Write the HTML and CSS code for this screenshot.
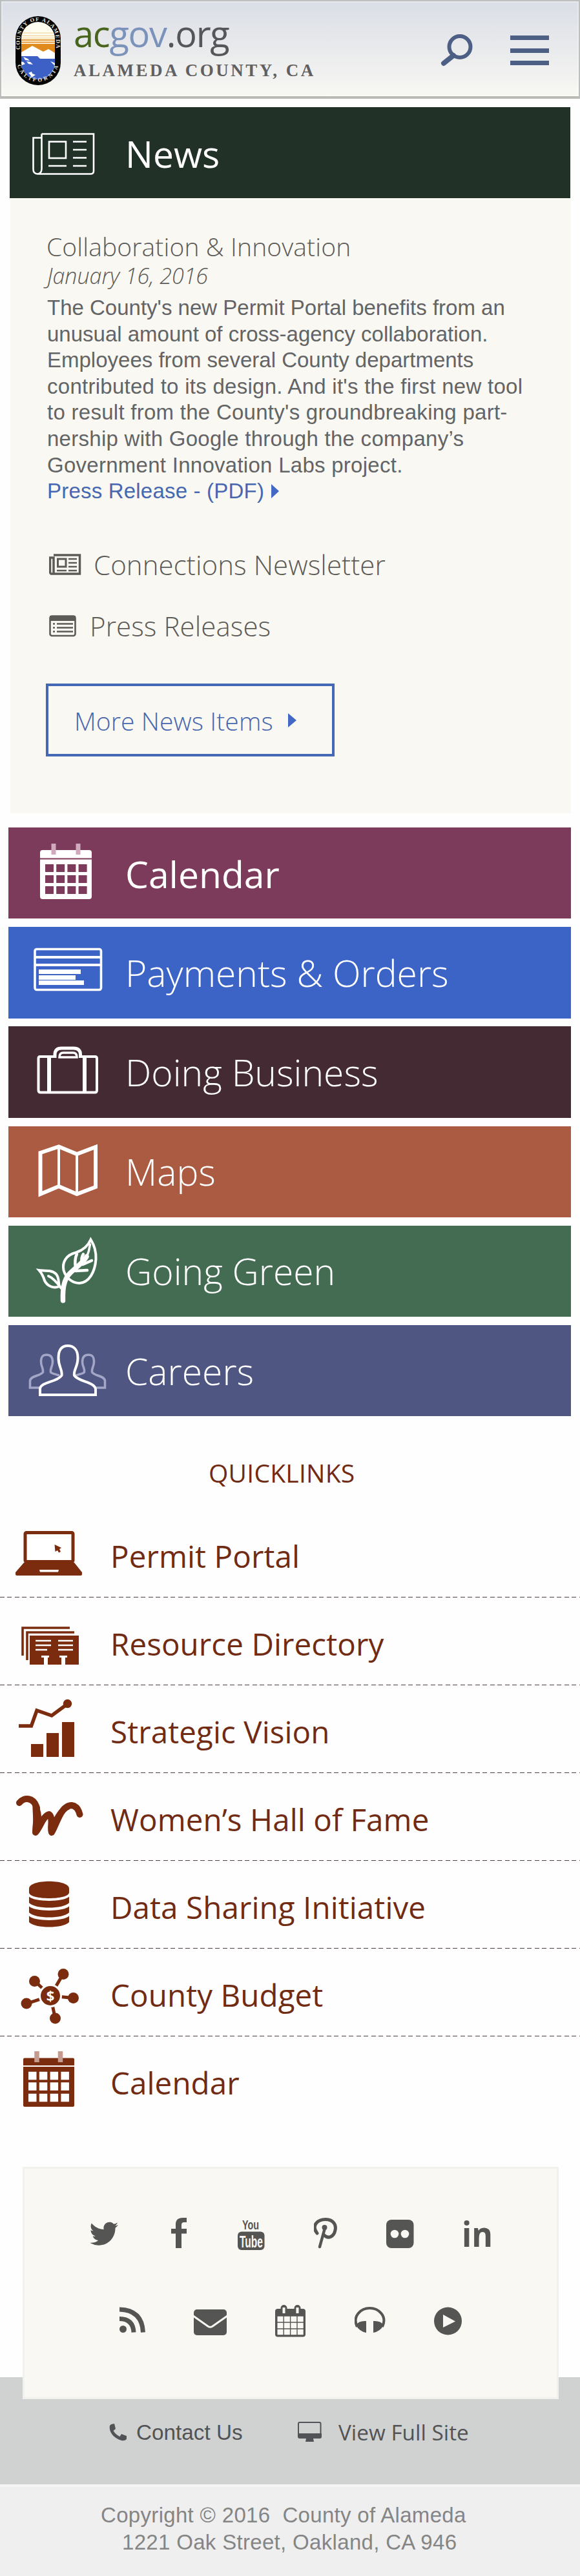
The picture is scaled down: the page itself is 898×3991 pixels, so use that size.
FILE: index.html
```html
<!DOCTYPE html>
<html lang="en">
<head>
<meta charset="utf-8">
<title>acgov.org - Alameda County, CA</title>
<link rel="stylesheet" href="styles.css">
</head>
<body>
<header class="site-header">
  <svg class="seal" viewBox="24 25 70 107" width="70" height="107">
    <defs>
      <clipPath id="sealClip"><rect x="33" y="34" width="52" height="89" rx="26"/></clipPath>
      <path id="sealTop" d="M31.500 77V60A27.500 27.500 0 0 1 86.500 60V79"/>
      <path id="sealBottom" d="M27 101A32.500 32.500 0 0 0 91 98V92"/>
    </defs>
    <rect x="24" y="25" width="70" height="107" rx="35" fill="#050505"/>
    <g clip-path="url(#sealClip)">
      <rect x="33" y="34" width="52" height="90" fill="#fffdf0"/>
      <path d="M33 51H85M33 55.500H85M33 59H85" stroke="#f3c98a" stroke-width="1.200"/>
      <path d="M33 62H85M33 65.500H85" stroke="#e59a3a" stroke-width="2"/>
      <rect x="33" y="68" width="52" height="20" fill="#e08a1c"/>
      <path d="M33 81L50 71L67 80L75 76L85 82V92H33Z" fill="#fff"/>
      <path d="M33 87H58L62 91H85V124H33Z" fill="#3c60c6"/>
      <path d="M36 88L43 91L46 94L39 93ZM41 95L47 96L51 100L44 99ZM30 95L36 96L39 99L34 101ZM78 95L86 98L85 102ZM44 113L49 111L50 114L55 116L49 120L47 116Z" fill="#fff"/>
    </g>
    <text class="seal-text"><textPath href="#sealTop" textLength="118">COUNTY OF ALAMEDA</textPath></text>
    <text class="seal-text"><textPath href="#sealBottom" textLength="86">CALIFORNIA</textPath></text>
  </svg>
  <div class="brand">
    <div class="brand-name"><span class="brand-ac">ac</span><span class="brand-gov">gov</span>.org</div>
    <div class="brand-sub">ALAMEDA COUNTY, CA</div>
  </div>
  <svg class="icon-search" viewBox="682 50 52 54" width="52" height="54">
    <path d="M702 86L687 98" stroke="#4d5f85" stroke-width="8" stroke-linecap="round"/>
    <circle cx="712" cy="72.500" r="16.500" fill="none" stroke="#4d5f85" stroke-width="6"/>
  </svg>
  <div class="hamburger"><i></i><i></i><i></i></div>
</header>

<section class="news-head">
  <svg viewBox="15 166 184 141" width="184" height="141" fill="none" stroke="#fff" stroke-width="2.600">
    <path d="M64.500 207.500H145V265Q145 269.500 140 269.500H58Q51.500 269 51.500 262V213.500H64.500M64.500 207.500V262Q64 269 58 269.500"/>
    <rect x="76" y="219.500" width="26" height="25.500"/>
    <path d="M113 219.500H134M113 232H134M113 244.500H134M113 257H134M75 257H103"/>
  </svg>
  <h2 class="bar-title regular">News</h2>
</section>
<section class="panel">
  <h3 class="story-title">Collaboration &amp; Innovation</h3>
  <p class="story-date">January 16, 2016</p>
  <p class="story">The County's new Permit Portal benefits from an<br>unusual amount of cross-agency collaboration.<br>Employees from several County departments<br><span class="loose">contributed to its design. And it's the first new tool<br>to result from the County's groundbreaking part-<br>nership with Google through the company’s<br>Government Innovation Labs project.</span><br><a class="pdf">Press Release - (PDF)<svg viewBox="0 0 12 22" width="12" height="22"><path d="M0 0L12 11L0 22Z" fill="#4369c4"/></svg></a></p>
  <div class="feed">
    <svg viewBox="76 858 50 34" width="50" height="34" fill="none" stroke="#5c5b57">
      <path d="M83 860H123.500V889H79Q77.500 888 77.500 886V864H83V888" stroke-width="3.500"/>
      <rect x="89.500" y="866" width="12.500" height="12" stroke-width="3"/>
      <path d="M106 866H119M106 872H119M106 878H119M106 884H119M88 884H103" stroke-width="2.600"/>
    </svg>
    <span>Connections Newsletter</span>
  </div>
  <div class="feed feed-press">
    <svg viewBox="76 953 42 34" width="42" height="34">
      <rect x="77.500" y="954.500" width="39" height="30.500" rx="3" fill="none" stroke="#5c5b57" stroke-width="2.600"/>
      <path d="M77 954H117V962H77Z" fill="#5c5b57"/>
      <path d="M82 966.500H85M88 966.500H113M82 972.500H85M88 972.500H113M82 978.500H85M88 978.500H113" stroke="#5c5b57" stroke-width="2.600"/>
    </svg>
    <span>Press Releases</span>
  </div>
  <a class="more"><span>More News Items</span><svg viewBox="0 0 13 22" width="13" height="22"><path d="M0 0L13 11L0 22Z" fill="#4369c4"/></svg></a>
</section>

<nav class="menu">
  <a class="bar plum">
    <svg viewBox="13 1282 186 141" width="186" height="141">
      <rect x="62" y="1317" width="80" height="76" rx="4" fill="#fff"/>
      <path d="M62 1330.500H142" stroke="#7d3b5c" stroke-width="2"/>
      <path d="M83 1307V1324M121 1307V1324" stroke="#d0a9bd" stroke-width="7"/>
      <path d="M70 1345H135M70 1362H135M70 1379H135" stroke="#7d3b5c" stroke-width="12" stroke-dasharray="13 4.200"/>
    </svg>
    <h2 class="bar-title regular">Calendar</h2>
  </a>
  <a class="bar blue">
    <svg viewBox="13 1437 186 141" width="186" height="141">
      <rect x="54" y="1471.500" width="102.500" height="63" rx="3" fill="none" stroke="#fff" stroke-width="3.600"/>
      <path d="M54 1484H156M54 1496H156" stroke="#fff" stroke-width="4"/>
      <path d="M60 1503H125V1510H60ZM60 1512H117V1519H60ZM60 1520H130V1527H60Z" fill="#fff"/>
    </svg>
    <h2 class="bar-title">Payments &amp; Orders</h2>
  </a>
  <a class="bar maroon">
    <svg viewBox="13 1591 186 141" width="186" height="141" fill="none" stroke="#fff">
      <path d="M84 1637H62Q59.500 1637 59.500 1640V1689Q59.500 1692.500 63 1692.500H147Q150 1692.500 150 1689V1640Q150 1637 147 1637H126" stroke-width="4"/>
      <path d="M76 1637V1692M131 1637V1692" stroke-width="6"/>
      <path d="M85 1639V1634Q85 1624 95 1624H114Q124.500 1624 124.500 1634V1639" stroke-width="5"/>
      <path d="M92 1638Q92 1631 98 1631H113Q119 1631 119 1638Z" stroke-width="3.500"/>
    </svg>
    <h2 class="bar-title">Doing Business</h2>
  </a>
  <a class="bar rust">
    <svg viewBox="13 1745 186 141" width="186" height="141" fill="none" stroke="#fff">
      <path d="M62.500 1786L91 1776.500L119 1788L148 1777V1839L119 1850L91 1838L62.500 1850Z" stroke-width="6"/>
      <path d="M91 1778V1838M119 1788V1849" stroke-width="4"/>
    </svg>
    <h2 class="bar-title">Maps</h2>
  </a>
  <a class="bar green">
    <svg viewBox="13 1898 186 141" width="186" height="141" fill="none" stroke="#fff" stroke-linecap="round">
      <path d="M140.500 1919.500C136 1930 128 1936 118 1939.500C102 1943 96 1955 98.500 1967C102 1979 112 1987 123 1987C138 1986 147 1970 148.500 1950C149 1938 146 1928 140.500 1919.500Z" stroke-width="4"/>
      <path d="M97.500 2014C97 1998 98 1982 108 1972C118 1962 128 1956 134 1946" stroke-width="7.500"/>
      <path d="M134 1947Q138 1938 139.500 1927" stroke-width="3.500"/>
      <path d="M117 1964Q115 1950 119 1942M127 1956Q125 1948 129 1942M117 1968L135 1967M128 1958L142 1952" stroke-width="4.500"/>
      <path d="M60.500 1967C68 1968 80 1966 87 1973C92 1979 90 1986 92 1992C82 1996 73 1991 69 1983C67 1976 64 1971 60.500 1967Z" stroke-width="4"/>
      <path d="M75 1976Q83 1979 95 1995" stroke-width="4"/>
    </svg>
    <h2 class="bar-title">Going Green</h2>
  </a>
  <a class="bar indigo">
    <svg viewBox="13 2053 186 141" width="186" height="141" fill="none" stroke="#fff">
      <g stroke="#a3a6c6" stroke-width="3.600">
        <path id="peerShape" d="M61 2150H46.500V2139C48 2131 62 2132 66.500 2126C67.500 2119 63.500 2118 63.500 2110C63.500 2102 66 2099 72 2099C79 2099 81.500 2103 81.500 2110C81.500 2118 77 2120 78.500 2126C80 2128 86 2129 92 2131"/>
        <use href="#peerShape" transform="translate(209 0) scale(-1 1)"/>
      </g>
      <path d="M62 2161V2151C64 2141 89 2141 95.500 2131C97 2122 90.500 2118 90.500 2104C90.500 2091 96 2085 105 2085C114 2085 120.500 2091 120.500 2104C120.500 2118 113.500 2122 115 2131C122 2141 146 2141 148 2152V2161Z" stroke-width="4" fill="#4e5681"/>
    </svg>
    <h2 class="bar-title">Careers</h2>
  </a>
</nav>

<section class="quick">
  <h4 class="quick-title">QUICKLINKS</h4>
  <a class="quick-row">
    <svg viewBox="0 2339 171 134" width="171" height="134">
      <path d="M24 2436L37 2421H115L127 2436V2439Q127 2441 125 2441H26Q24 2441 24 2439Z" fill="#7b2c0e"/>
      <rect x="39" y="2374.500" width="74" height="45" rx="2" fill="#fff" stroke="#7b2c0e" stroke-width="5"/>
      <path d="M61 2432H91L90 2435.500H62Z" fill="#fff"/>
      <path d="M84.500 2393L95 2398L92 2400L94 2404L91 2405.500L89 2402L85.500 2404Z" fill="#7b2c0e"/>
    </svg>
    <span>Permit Portal</span>
  </a>
  <a class="quick-row">
    <svg viewBox="0 2475 171 134" width="171" height="134">
      <path d="M35 2565V2522H108M42 2572V2529H115" fill="none" stroke="#7b2c0e" stroke-width="3.600"/>
      <rect x="46" y="2534" width="76" height="45" fill="#7b2c0e"/>
      <path d="M55 2542H79M55 2549H79M55 2556H73M90 2542H113M90 2549H113M90 2556H113" stroke="#fff" stroke-width="2.600"/>
      <path d="M64 2565H76V2568H74V2579H68V2568H64ZM92 2565H104V2568H101V2579H95V2568H92Z" fill="#fff"/>
    </svg>
    <span>Resource Directory</span>
  </a>
  <a class="quick-row">
    <svg viewBox="0 2611 171 134" width="171" height="134">
      <path d="M29 2674H48.500L57 2650L80 2658L103 2641" fill="none" stroke="#7b2c0e" stroke-width="5.500"/>
      <circle cx="104.500" cy="2639.500" r="6.700" fill="#7b2c0e"/>
      <path d="M48 2702H67V2722H48ZM72 2685H91V2722H72ZM96 2668H115V2722H96Z" fill="#7b2c0e"/>
    </svg>
    <span>Strategic Vision</span>
  </a>
  <a class="quick-row">
    <svg viewBox="0 2747 171 134" width="171" height="134">
      <path d="M30 2793C37 2784 52 2784 57 2801C58 2814 55 2828 55 2839C63 2830 66 2814 76 2811C83 2816 77 2832 80 2839C88 2826 94 2797 111 2797C119 2798 122 2805 123.500 2811" fill="none" stroke="#7b2c0e" stroke-width="10" stroke-linecap="round" stroke-linejoin="round"/>
      <path d="M50 2790Q63 2796 64 2814L60 2836L52 2836Z" fill="#7b2c0e"/>
      <path d="M86 2812Q96 2795 110 2796L108 2803Q96 2808 84 2836L76 2830Z" fill="#7b2c0e"/>
    </svg>
    <span>Women’s Hall of Fame</span>
  </a>
  <a class="quick-row">
    <svg viewBox="0 2883 171 134" width="171" height="134" fill="#7b2c0e">
      <path d="M45 2926C45 2911 107 2911 107 2926V2932C107 2944 45 2944 45 2932Z"/>
      <path id="disc" d="M45 2938.500C54 2947 98 2947 107 2938.500V2948C98 2958 54 2958 45 2948Z"/>
      <use href="#disc" y="15"/>
      <use href="#disc" y="30"/>
    </svg>
    <span>Data Sharing Initiative</span>
  </a>
  <a class="quick-row">
    <svg viewBox="0 3019 171 134" width="171" height="134" fill="#7b2c0e">
      <path d="M78 3092L53.500 3069M78 3092L98 3058M78 3092L113 3095.500M78 3092L41.500 3104M78 3092L85.500 3127" stroke="#7b2c0e" stroke-width="5"/>
      <circle cx="53.500" cy="3069.500" r="8.500"/><circle cx="98" cy="3058.500" r="8.500"/><circle cx="113.500" cy="3095.500" r="8.500"/><circle cx="41" cy="3104" r="8.500"/><circle cx="85.500" cy="3127" r="8.500"/>
      <circle cx="78" cy="3092" r="16.500" stroke="#fff" stroke-width="3"/>
      <text class="dollar" x="78" y="3099.500">$</text>
    </svg>
    <span>County Budget</span>
  </a>
  <a class="quick-row">
    <svg viewBox="0 3155 171 134" width="171" height="134">
      <rect x="36" y="3188.500" width="79" height="75.500" rx="2" fill="#7b2c0e"/>
      <path d="M36 3201H115" stroke="#fff" stroke-width="2.200"/>
      <path d="M57 3178V3195M93.500 3178V3195" stroke="#c59b90" stroke-width="7.500"/>
      <path d="M44 3216H108M44 3232.500H108M44 3250H108" stroke="#fff" stroke-width="12.500" stroke-dasharray="12.500 4.300"/>
    </svg>
    <span>Calendar</span>
  </a>
</section>

<section class="social">
  <div class="social-row first">
    <svg viewBox="140 3430 125 60" width="125" height="60"><path transform="translate(138.700 3438.500) scale(1.850 1.850)" d="M24 4.600c-.9.400-1.800.7-2.800.8 1-.6 1.800-1.600 2.200-2.700-1 .6-2 1-3.100 1.200A4.900 4.900 0 0 0 11.900 8.400C7.800 8.200 4.200 6.200 1.700 3.200 .4 5.400 1 8.300 3.200 9.700c-.8 0-1.600-.2-2.200-.6 0 2.300 1.600 4.400 3.900 4.900-.7.200-1.500.2-2.200.1.600 2 2.400 3.400 4.600 3.400A9.900 9.900 0 0 1 0 19.500a14 14 0 0 0 7.500 2.200c9.100 0 14.300-7.700 14-14.600 1-.7 1.800-1.600 2.500-2.500z" fill="#555553"/></svg>
    <svg viewBox="265 3430 103 60" width="103" height="60"><path d="M289 3436V3443H285Q281 3443 281 3447V3453H289V3460.500H281V3483H272V3460.500H265V3453H272V3446Q272 3436 283 3436Z" fill="#555553"/></svg>
    <svg viewBox="368 3430 118 60" width="118" height="60"><rect x="368" y="3457.500" width="41.500" height="28.500" rx="6" fill="#555553"/><text class="yt" x="375" y="3453.500" textLength="26" lengthAdjust="spacingAndGlyphs">You</text><text class="yt tube" x="371" y="3481.500" textLength="36" lengthAdjust="spacingAndGlyphs">Tube</text></svg>
    <svg viewBox="486 3430 112 60" width="112" height="60" fill="none" stroke="#555553" stroke-linecap="round"><path d="M491 3460C481 3447 493 3438.500 504 3438.500C515 3438.500 521 3446 519 3455C517 3466 508 3469 502 3463" stroke-width="5"/><path d="M503 3452L495 3481" stroke-width="4.500"/><circle cx="502.500" cy="3451" r="2.500" stroke-width="3"/></svg>
    <svg viewBox="598 3430 116 60" width="116" height="60"><rect x="598" y="3439" width="42.500" height="44" rx="8" fill="#555553"/><circle cx="611" cy="3461" r="6.300" fill="#faf8f2"/><circle cx="627" cy="3461" r="6.300" fill="#faf8f2"/></svg>
    <svg class="in" viewBox="714 3415 54 90" width="54" height="90"><text class="linkedin" x="715" y="3481" textLength="48" lengthAdjust="spacingAndGlyphs">in</text></svg>
  </div>
  <div class="social-row second">
    <svg viewBox="185 3565 115 60" width="115" height="60" fill="none" stroke="#555553"><circle cx="190.500" cy="3608.500" r="5.500" fill="#555553" stroke="none"/><path d="M185 3592.500Q206 3592.500 207 3613.500M185 3578Q220 3579 221.500 3613.500" stroke-width="7"/></svg>
    <svg viewBox="300 3565 126 60" width="126" height="60"><rect x="300" y="3578" width="51" height="40" rx="5" fill="#555553"/><path d="M299 3588L322.500 3604.500Q325.500 3606 328.500 3604.500L352 3588" fill="none" stroke="#faf8f2" stroke-width="3"/></svg>
    <svg viewBox="426 3565 123 60" width="123" height="60"><rect x="426" y="3577" width="47" height="43.500" rx="4" fill="#555553"/><path d="M439.500 3576V3583M460.500 3576V3583" stroke="#555553" stroke-width="10" stroke-linecap="round"/><path d="M439.500 3575V3584M460.500 3575V3584" stroke="#faf8f2" stroke-width="4"/><path d="M429.500 3593H470M429.500 3603H470M429.500 3613H470" stroke="#faf8f2" stroke-width="8.500" stroke-dasharray="9 1.400"/></svg>
    <svg viewBox="549 3565 123 60" width="123" height="60"><path d="M553 3605C545 3588 559 3576 572.500 3576C586 3576 600 3588 592 3605" fill="none" stroke="#555553" stroke-width="4"/><path d="M567 3596V3614Q556 3612 551 3602Q556 3595 567 3596ZM578 3596V3614Q589 3612 594 3602Q589 3595 578 3596Z" fill="#555553"/></svg>
    <svg viewBox="672 3565 48 60" width="48" height="60"><circle cx="693.500" cy="3596" r="21.500" fill="#555553"/><path d="M686 3586L705 3596.500L686 3606Z" fill="#faf8f2"/></svg>
  </div>
</section>
<footer class="footer">
  <div class="footer-links">
    <a class="contact"><svg viewBox="168 3753 30 30" width="30" height="30"><path d="M172 3756L177 3755L179 3763L175.500 3766Q179 3772 185.500 3775L188 3771L196 3774V3779Q193 3782 188 3781C177 3778 168 3768 170 3758Z" fill="#515357"/></svg><span>Contact Us</span></a>
    <a class="full"><svg viewBox="461 3751 38 33" width="38" height="33"><rect x="462" y="3753" width="34.500" height="22" rx="2" fill="none" stroke="#515357" stroke-width="2"/><path d="M461 3770H498V3775Q498 3778 495 3778H485L486 3783H473L474 3778H464Q461 3778 461 3775Z" fill="#515357"/></svg><span>View Full Site</span></a>
  </div>
  <div class="legal"><p class="copy">Copyright © 2016&nbsp; County of Alameda</p><p class="address">1221 Oak Street, Oakland, CA 946</p></div>
</footer>
</body>
</html>
```
FILE: styles.css
```css
* { box-sizing: border-box; margin: 0; padding: 0; }
body { width: 898px; background: #fefefe; font-family: "Open Sans", sans-serif; font-weight: 300; color: #5c5b57; }
svg { display: block; flex: none; }
h2, h3, h4 { font-weight: 300; }
h2, h3, h4, p, span, div { white-space: nowrap; }

.site-header { display: flex; align-items: flex-start; height: 153px; padding-left: 22px; border: 2px solid #bcbfbe; border-bottom: 4px solid #bbbbb6; background: linear-gradient(#dadee6, #e9eaec 50%, #f8f8f3); box-shadow: inset 0 0 0 2px rgba(255, 255, 255, .3); }
.seal { margin-top: 23px; }
.seal-text { font: 700 8.500px "Liberation Serif", serif; fill: #e8e6dc; }
.brand { width: 567px; margin: 19px 0 0 20px; }
.brand-name { font-size: 56px; line-height: 60px; letter-spacing: -1.250px; font-weight: 400; color: #555659; }
.brand-ac { color: #47651c; }
.brand-gov { color: #7b93ba; }
.brand-sub { margin-top: 13px; font: 700 27px/30px "Liberation Serif", serif; letter-spacing: 3.500px; color: #606062; }
.icon-search { margin-top: 48px; margin-left: 1px; }
.hamburger { display: flex; flex-direction: column; gap: 12.500px; width: 60px; margin: 53px 0 0 56px; }
.hamburger i { height: 7px; background: #4d5f85; }

.news-head { display: flex; align-items: center; width: 868px; height: 141px; margin: 13px 0 0 15px; background: #213128; }
.news-head .bar-title { padding-top: 3px; }
.bar-title { margin-left: -5px; font-size: 57px; line-height: 140px; color: #fff; }
.regular { font-weight: 400; }
.panel { width: 868px; height: 953px; margin-left: 16px; padding: 53px 0 0 57px; background: #faf8f2; }
.story-title { font-size: 39px; line-height: 44px; margin-left: -1px; letter-spacing: .12px; }
.story-date { margin-top: 3px; font-size: 34px; line-height: 40px; font-style: italic; }
.story { margin-top: 10px; font: 400 33px/40.600px "Liberation Sans", Arial, sans-serif; color: #636466; }
.loose { letter-spacing: .27px; }
.pdf { display: flex; align-items: center; gap: 11px; color: #4767b0; letter-spacing: .2px; }
.feed { display: flex; align-items: center; height: 48px; padding-left: 3px; margin-top: 69px; font-size: 42px; line-height: 48px; gap: 19px; letter-spacing: .08px; }
.feed-press { margin-top: 47px; gap: 21px; }
.more { display: flex; align-items: center; gap: 23px; width: 447px; height: 113px; margin: 65px 0 0 -2px; padding: 2px 0 0 40px; border: 4px solid #4468b4; font-size: 39px; letter-spacing: .1px; color: #4767b0; }

.menu { display: flex; flex-direction: column; gap: 12.800px; margin: 22px 0 0 13px; width: 871px; }
.bar { display: flex; align-items: center; height: 141.400px; }
.plum { background: #7d3b5c; }
.plum .bar-title { padding-top: 2px; }
.blue { background: #3c64c6; }
.maroon { background: #442a32; }
.rust { background: #ab5b41; }
.green { background: #446c52; }
.indigo { background: #4e5681; }

.quick { color: #702b12; font-weight: 400; }
.quick-title { padding: 68px 0 37px 323px; font-size: 39px; line-height: 40px; font-weight: 400; letter-spacing: .25px; }
.quick-row { display: flex; height: 136px; background: repeating-linear-gradient(90deg, #51403c 0 7px, transparent 7px 11.500px) 0 100% / 100% 1px no-repeat; font-size: 47.500px; line-height: 144px; letter-spacing: .1px; }
.quick-row:last-child { background: none; }
.dollar { font: 700 22px "Open Sans", sans-serif; fill: #fff; text-anchor: middle; letter-spacing: 0; }

.social { position: relative; width: 830px; height: 360px; margin: 66px 0 -34px 35px; padding-top: 70px; border: 3px solid #f1f1ee; background: #faf8f2; }
.social-row { display: flex; height: 60px; }
.first { padding-left: 102px; }
.in { margin-top: -15px; }
.second { padding-left: 147px; margin-top: 75px; }
.yt { font: 700 21px "Liberation Sans", Arial, sans-serif; fill: #555553; }
.tube { font-size: 25px; fill: #faf8f2; }
.linkedin { font: 700 53px "Open Sans", sans-serif; fill: #555553; }
.footer-links { display: flex; height: 166px; padding: 66px 0 0 168px; background: #cfd2d1; font-size: 33.300px; line-height: 40px; font-weight: 400; color: #515357; }
.contact { display: flex; gap: 13px; width: 293px; font-family: "Liberation Sans", Arial, sans-serif; }
.contact svg { margin-top: 4px; }
.full { display: flex; gap: 25px; }
.full svg { margin-top: 2px; }
.full span { margin-top: -1px; }
.legal { height: 142px; padding-top: 23px; border-top: 4px solid #f5f5f5; background: #efeff0; color: #858585; font: 400 33px/41.500px "Liberation Sans", Arial, sans-serif; letter-spacing: .32px; }
.copy { padding-left: 156px; }
.address { padding-left: 189px; }
```
